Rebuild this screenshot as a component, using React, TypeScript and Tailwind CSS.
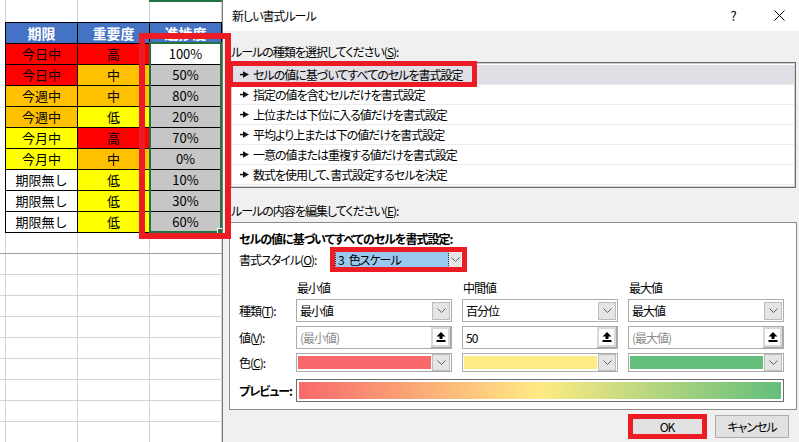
import React from "react";

type Row = { a: string; ac: string; b: string; bc: string; c: string };

const rows: Row[] = [
  { a: "今日中", ac: "bg-[#ff0000]", b: "高", bc: "bg-[#ff0000]", c: "100%" },
  { a: "今日中", ac: "bg-[#ff0000]", b: "中", bc: "bg-[#ffc000]", c: "50%" },
  { a: "今週中", ac: "bg-[#ffc000]", b: "中", bc: "bg-[#ffc000]", c: "80%" },
  { a: "今週中", ac: "bg-[#ffc000]", b: "低", bc: "bg-[#ffff00]", c: "20%" },
  { a: "今月中", ac: "bg-[#ffff00]", b: "高", bc: "bg-[#ff0000]", c: "70%" },
  { a: "今月中", ac: "bg-[#ffff00]", b: "中", bc: "bg-[#ffc000]", c: "0%" },
  { a: "期限無し", ac: "bg-white", b: "低", bc: "bg-[#ffff00]", c: "10%" },
  { a: "期限無し", ac: "bg-white", b: "低", bc: "bg-[#ffff00]", c: "30%" },
  { a: "期限無し", ac: "bg-white", b: "低", bc: "bg-[#ffff00]", c: "60%" },
];

function GridRow({ dark }: { dark?: boolean }) {
  return (
    <div
      className={
        "h-[21px] shrink-0 flex border-b " +
        (dark ? "border-[#9e9e9e]" : "border-[#d4d4d4]")
      }
    >
      <div className="w-[6px] border-r border-[#d4d4d4]" />
      <div className="w-[72px] border-r border-[#d4d4d4]" />
      <div className="w-[72px] border-r border-[#d4d4d4]" />
      <div className="w-[72px] border-r border-[#d4d4d4]" />
    </div>
  );
}

function Sheet() {
  return (
    <div className="relative w-[222px] h-[442px] shrink-0 flex flex-col overflow-hidden bg-white">
      <div className="h-[22px] shrink-0 flex">
        <div className="w-[6px] border-r border-[#d4d4d4]" />
        <div className="w-[72px] border-r border-[#d4d4d4]" />
        <div className="w-[72px] border-r border-[#d4d4d4]" />
        <div className="w-[72px] border-r border-[#d4d4d4]" />
      </div>
      <div className="ml-[5px] w-[217px] shrink-0 border-l border-t border-black flex flex-col text-[13px] text-black">
        <div className="h-[21px] flex text-white font-bold text-[14px]">
          <div className="w-[72px] border-r border-b border-black bg-[#4472c4] flex items-center justify-center">期限</div>
          <div className="w-[72px] border-r border-b border-black bg-[#4472c4] flex items-center justify-center">重要度</div>
          <div className="w-[72px] border-r border-b border-black bg-[#4472c4] flex items-center justify-center">進捗度</div>
        </div>
        {rows.map((r, i) => (
          <div key={i} className="h-[21px] flex">
            <div className={"w-[72px] border-r border-b border-black flex items-center justify-center " + r.ac}>{r.a}</div>
            <div className={"w-[72px] border-r border-b border-black flex items-center justify-center " + r.bc}>{r.b}</div>
            <div
              className={
                "w-[72px] border-r border-b border-black flex items-center justify-center " +
                (i === 0 ? "bg-white" : "bg-[#c6c6c6]")
              }
            >
              {r.c}
            </div>
          </div>
        ))}
      </div>
      <GridRow dark />
      {Array.from({ length: 9 }).map((_, i) => (
        <GridRow key={i} />
      ))}
      <div className="absolute left-[149px] top-[42px] w-[73px] h-[191px] border-2 border-[#217346]" />
      <div className="absolute left-[217px] top-[228px] w-[6px] h-[6px] bg-[#217346] border border-white" />
      <div className="absolute left-[149px] top-0 w-[73px] h-[2px] bg-[#217346]" />
    </div>
  );
}

function Chevron() {
  return (
    <svg width="9" height="5" viewBox="0 0 9 5">
      <polyline points="0.5,0.5 4.5,4.5 8.5,0.5" fill="none" stroke="#606060" strokeWidth="1" />
    </svg>
  );
}

function DropBtn({ h }: { h: string }) {
  return (
    <div className={"w-[18px] shrink-0 bg-[#e5e5e5] border border-[#bdbdbd] flex items-center justify-center " + h}>
      <Chevron />
    </div>
  );
}

function RefIcon() {
  return (
    <svg width="10" height="10" viewBox="0 0 10 10">
      <path d="M5 0 L9.5 4.5 H6.5 V7 H3.5 V4.5 H0.5 Z" fill="#000" />
      <rect x="0.5" y="8" width="9" height="2" fill="#000" />
    </svg>
  );
}

function ListArrow() {
  return (
    <svg width="9" height="7" viewBox="0 0 9 7" className="shrink-0">
      <rect x="0" y="2.8" width="4" height="1.5" fill="#111" />
      <polygon points="3,0.3 9,3.5 3,6.7" fill="#111" />
    </svg>
  );
}

const listItems = [
  "セルの値に基づいてすべてのセルを書式設定",
  "指定の値を含むセルだけを書式設定",
  "上位または下位に入る値だけを書式設定",
  "平均より上または下の値だけを書式設定",
  "一意の値または重複する値だけを書式設定",
  "数式を使用して、書式設定するセルを決定",
];

function TypeCombo({ text }: { text: string }) {
  return (
    <div className="w-[156px] shrink-0 h-[23px] border border-[#acacac] bg-white flex items-center pr-[1px]">
      <span className="flex-1 pl-[3px] leading-[21px]">{text}</span>
      <DropBtn h="h-[18px]" />
    </div>
  );
}

function ValueInput({ text, muted }: { text: string; muted?: boolean }) {
  return (
    <div className="w-[156px] shrink-0 h-[23px] border border-[#acacac] bg-white flex items-center">
      <span className={"flex-1 pl-[3px] leading-[21px] " + (muted ? "text-[#8c8c8c]" : "text-black")}>{text}</span>
      <div className="w-[20px] h-[21px] shrink-0 bg-[#d9d9d9] p-[2px] border-r border-b border-[#a8a8a8]">
        <div className="w-full h-full bg-white flex items-center justify-center">
          <RefIcon />
        </div>
      </div>
    </div>
  );
}

function ColorCombo({ color }: { color: string }) {
  return (
    <div className="w-[156px] shrink-0 h-[19px] border border-[#acacac] bg-white flex items-center pl-[1px] pr-[1px]">
      <div className={"flex-1 h-[13px] mr-[1px] " + color} />
      <DropBtn h="h-[17px]" />
    </div>
  );
}

function Dialog() {
  return (
    <div className="w-[577px] h-[442px] shrink-0 border-l border-[#7a7a7a] flex flex-col text-[12px] tracking-[-1px] text-black [font-feature-settings:'palt']">
      <div className="h-[31px] shrink-0 bg-white flex items-center">
        <span className="pl-[9px] leading-[16px]">新しい書式ルール</span>
        <div className="ml-auto w-[52px] flex justify-center text-[13px]">?</div>
        <div className="w-[40px] flex justify-center">
          <svg width="11" height="11" viewBox="0 0 11 11">
            <path d="M0.5 0.5 L10.5 10.5 M10.5 0.5 L0.5 10.5" stroke="#000" strokeWidth="1" />
          </svg>
        </div>
      </div>
      <div className="flex-1 bg-[#f0f0f0] flex flex-col pl-[7px]">
        <div className="mt-[13px] leading-[16px] pl-[1px]">
          ルールの種類を選択してください(<span className="underline">S</span>):
        </div>
        <div className="mt-[2px] w-[566px] h-[126px] border border-[#6a6a6a] bg-white">
          <div className="w-full h-full border border-[#d0d0d0] pt-[1px] pb-[1px]">
            {listItems.map((t, i) => (
              <div
                key={i}
                className={
                  "h-[20px] flex items-center pl-[8px] border-b border-[#ececec] " +
                  (i === 0 ? "bg-[#dfdfe5]" : "bg-white")
                }
              >
                <ListArrow />
                <span className="ml-[4px] leading-[19px]">{t}</span>
              </div>
            ))}
          </div>
        </div>
        <div className="mt-[15px] leading-[16px] pl-[1px]">
          ルールの内容を編集してください(<span className="underline">E</span>):
        </div>
        <div className="mt-[3px] ml-[-1px] w-[568px] h-[188px] shrink-0 border border-[#8c8c8c] bg-white pl-[9px] pt-[8px] flex flex-col">
          <div className="font-bold leading-[16px]">セルの値に基づいてすべてのセルを書式設定:</div>
          <div className="mt-[4px] h-[17px] flex items-center">
            <span className="w-[96px] shrink-0 leading-[17px]">
              書式スタイル(<span className="underline">O</span>):
            </span>
            <div className="w-[126px] h-[17px] flex">
              <div className="flex-1 bg-[#99c9ef] border border-dotted border-[#333] leading-[15px] pl-[2px] flex">
                <span>3</span>
                <span className="ml-[5px]">色スケール</span>
              </div>
              <div className="w-[12px] bg-[#e5e5e5] flex items-center justify-center">
                <Chevron />
              </div>
            </div>
          </div>
          <div className="mt-[12px] h-[16px] flex gap-[10px] leading-[16px]">
            <span className="w-[47px] shrink-0" />
            <span className="w-[156px] shrink-0 pl-[1px]">最小値</span>
            <span className="w-[156px] shrink-0 pl-[1px]">中間値</span>
            <span className="w-[156px] shrink-0 pl-[1px]">最大値</span>
          </div>
          <div className="mt-[3px] flex gap-[10px] items-center">
            <span className="w-[47px] shrink-0 whitespace-nowrap">
              種類(<span className="underline">T</span>):
            </span>
            <TypeCombo text="最小値" />
            <TypeCombo text="百分位" />
            <TypeCombo text="最大値" />
          </div>
          <div className="mt-[4px] flex gap-[10px] items-center">
            <span className="w-[47px] shrink-0 whitespace-nowrap">
              値(<span className="underline">V</span>):
            </span>
            <ValueInput text="(最小値)" muted />
            <ValueInput text="50" />
            <ValueInput text="(最大値)" muted />
          </div>
          <div className="mt-[4px] flex gap-[10px] items-center">
            <span className="w-[47px] shrink-0 whitespace-nowrap">
              色(<span className="underline">C</span>):
            </span>
            <ColorCombo color="bg-[#f8696b]" />
            <ColorCombo color="bg-[#ffeb84]" />
            <ColorCombo color="bg-[#63be7b]" />
          </div>
          <div className="mt-[7px] flex gap-[10px] items-center">
            <span className="w-[47px] shrink-0 whitespace-nowrap font-bold">プレビュー:</span>
            <div className="w-[488px] shrink-0 h-[23px] border border-[#6d6d6d] bg-white p-[2px]">
              <div className="w-full h-full bg-[linear-gradient(to_right,#f8696b,#ffeb84,#63be7b)]" />
            </div>
          </div>
        </div>
        <div className="mt-[5px] flex justify-end pr-[10px] gap-[11px]">
          <div className="w-[74px] h-[23px] border border-[#0078d7] bg-[#e1e1e1] flex items-center justify-center">OK</div>
          <div className="w-[74px] h-[23px] border border-[#adadad] bg-[#e1e1e1] flex items-center justify-center">キャンセル</div>
        </div>
      </div>
    </div>
  );
}

export default function App() {
  return (
    <div className="relative w-[799px] h-[442px] overflow-hidden bg-white flex font-['Noto_Sans_CJK_JP',sans-serif]">
      <Sheet />
      <Dialog />
      <div className="pointer-events-none absolute left-[139px] top-[33px] w-[92px] h-[206px] border-[6px] border-[#ed1c24]" />
      <div className="pointer-events-none absolute left-[228px] top-[61px] w-[249px] h-[26px] border-[5px] border-[#ed1c24]" />
      <div className="pointer-events-none absolute left-[330px] top-[247px] w-[137px] h-[25px] border-[5px] border-[#ed1c24]" />
      <div className="pointer-events-none absolute left-[628px] top-[414px] w-[79px] h-[25px] border-[5px] border-[#ed1c24]" />
    </div>
  );
}
